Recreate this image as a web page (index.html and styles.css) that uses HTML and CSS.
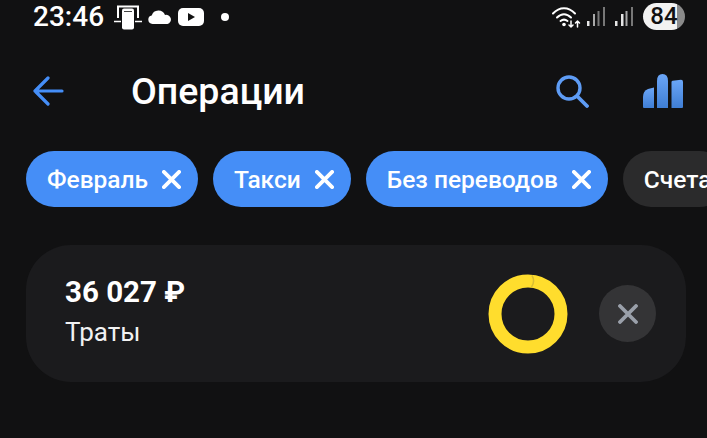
FILE: index.html
```html
<!DOCTYPE html>
<html lang="ru">
<head>
    <meta charset="UTF-8">
    <meta name="viewport" content="width=device-width, initial-scale=1.0">
    <title>Операции</title>
    <link rel="stylesheet" href="styles.css">
</head>
<body>
    <div class="status-bar">
        <span class="time">23:46</span>
        <svg class="status-icon" width="28" height="26" viewBox="0 0 28 26">
            <path d="M4 14V2.500h20V14" fill="none" stroke="#fff" stroke-width="2"/>
            <path d="M0 17.500h7M21 17.500h7" stroke="#fff" stroke-width="1.500"/>
            <rect x="8" y="4.500" width="12" height="21" rx="2" fill="#fff"/>
            <rect x="10" y="7" width="8" height="1" fill="#444"/>
        </svg>
        <svg class="status-icon" width="24" height="14" viewBox="0 0 24 14">
            <path d="M4.500 14a4.300 4.300 0 0 1-.8-8.500A7 7 0 0 1 17 5a4.600 4.600 0 0 1 2.500 9z" fill="#fff"/>
        </svg>
        <svg class="status-icon" width="26" height="18" viewBox="0 0 26 18">
            <rect width="26" height="18" rx="5" fill="#fff"/>
            <path d="M10 5v8l7-4z" fill="#111"/>
        </svg>
        <span class="dot"></span>
        <div class="status-right">
            <svg class="wifi" width="29" height="22" viewBox="0 0 29 22">
                <g fill="none" stroke="#fff" stroke-width="2" stroke-linecap="round">
                    <path d="M1 7.500C7.500 .5 16.500 .5 23 7.500"/>
                    <path d="M5 11.500c4.500-4.500 9.500-4.500 14 0"/>
                    <path d="M8.500 15c2.500-2 4.500-2 7 0"/>
                    <path d="M19 15v6M19 21l-2-2M19 21l2-2" stroke-width="1.500"/>
                    <path d="M25.500 21v-6M25.500 15l-2 2M25.500 15l2 2" stroke-width="1.500"/>
                </g>
                <circle cx="12" cy="18.500" r="1.800" fill="#fff"/>
            </svg>
            <svg class="signal" width="18" height="19" viewBox="0 0 18 19">
                <rect x="0" y="14" width="2.500" height="5" fill="#e6e6e6"/>
                <rect x="6" y="7" width="2" height="12" fill="#a8a8a8"/>
                <rect x="10.500" y="4" width="2" height="15" fill="#777"/>
                <rect x="16" y="0" width="2" height="19" fill="#777"/>
            </svg>
            <svg class="signal" width="18" height="19" viewBox="0 0 18 19">
                <rect x="0" y="14" width="2.500" height="5" fill="#e6e6e6"/>
                <rect x="6" y="7" width="2.500" height="12" fill="#e6e6e6"/>
                <rect x="10.500" y="4" width="2" height="15" fill="#a8a8a8"/>
                <rect x="16" y="0" width="2" height="19" fill="#777"/>
            </svg>
            <span class="battery">84</span>
        </div>
    </div>

    <div class="header">
        <svg class="back" width="32" height="30" viewBox="0 0 32 30">
            <path d="M30 15H3M16 2 3 15 16 28" fill="none" stroke="#458ef7" stroke-width="3.200" stroke-linecap="round" stroke-linejoin="round"/>
        </svg>
        <h1 class="title">Операции</h1>
        <svg class="search" width="34" height="34" viewBox="0 0 34 34">
            <circle cx="14" cy="14" r="11" fill="none" stroke="#5e9cf5" stroke-width="3.400"/>
            <path d="M22.500 22.500 32 32" stroke="#5e9cf5" stroke-width="3.800" stroke-linecap="round"/>
        </svg>
        <svg class="chart" width="40" height="34" viewBox="0 0 40 34">
            <defs>
                <linearGradient id="bars" x1="0" y1="0" x2="0" y2="1">
                    <stop offset="0" stop-color="#6ba6f8"/>
                    <stop offset="1" stop-color="#3f7ed4"/>
                </linearGradient>
            </defs>
            <path d="M1 34q-1 0-1-1V23q0-6 5-8l6-1.500V34z" fill="url(#bars)"/>
            <path d="M14 34V7q0-7 5.500-7T25 7v27z" fill="url(#bars)"/>
            <path d="M28.500 34V8q0-1 1-1.200l8.500-1q2 0 2 2V33q0 1-1 1z" fill="url(#bars)"/>
        </svg>
    </div>

    <div class="filters">
        <div class="chip active">Февраль <svg class="chip-x" width="19" height="19" viewBox="0 0 20 20"><path d="M2 2l16 16M18 2 2 18"/></svg></div>
        <div class="chip active">Такси <svg class="chip-x" width="19" height="19" viewBox="0 0 20 20"><path d="M2 2l16 16M18 2 2 18"/></svg></div>
        <div class="chip active">Без переводов <svg class="chip-x" width="19" height="19" viewBox="0 0 20 20"><path d="M2 2l16 16M18 2 2 18"/></svg></div>
        <div class="chip">Счета</div>
    </div>

    <div class="card">
        <div class="card-text">
            <div class="amount">36 027 ₽</div>
            <div class="label">Траты</div>
        </div>
        <svg class="ring" width="80" height="80" viewBox="0 0 80 80">
            <circle cx="40" cy="40" r="33" fill="none" stroke="#ffdd2d" stroke-width="13"/>
            <path d="M44 1.500q3.500 6-.500 11.500" fill="none" stroke="#d9bd33" stroke-width="1.500"/>
        </svg>
        <div class="close">
            <svg width="20" height="20" viewBox="0 0 20 20"><path d="M2 2l16 16M18 2 2 18"/></svg>
        </div>
    </div>
</body>
</html>
```

FILE: styles.css
```css
body {
    font-family: Roboto, "Noto Sans", sans-serif;
    background-color: #111112;
    color: #fff;
    margin: 0;
    height: 438px;
    overflow: hidden;
}

.status-bar {
    display: flex;
    align-items: center;
    height: 33px;
    padding: 0 22px 0 33px;
}

.time {
    font-size: 28px;
    font-weight: 500;
    margin-right: 10px;
}

.status-icon {
    margin-right: 6px;
}

.dot {
    width: 8px;
    height: 8px;
    margin-left: 11px;
    border-radius: 50%;
    background: #fff;
}

.status-right {
    display: flex;
    align-items: center;
    margin-left: auto;
}

.wifi {
    margin-right: 6px;
}

.signal {
    margin-right: 10px;
}

.battery {
    width: 42px;
    height: 27px;
    border-radius: 14px;
    background: linear-gradient(90deg, #f2f2f2 82%, #8a8a8a 82%);
    color: #111;
    font-size: 24px;
    font-weight: 500;
    line-height: 27px;
    text-align: center;
}

.header {
    display: flex;
    align-items: center;
    height: 116px;
    padding: 0 24px 2px 32px;
}

.back {
    margin-right: 67px;
}

.title {
    flex: 1;
    margin: 0;
    font-size: 37.500px;
    font-weight: 500;
}

.search {
    margin-right: 54px;
}

.filters {
    display: flex;
    gap: 15px;
    padding-left: 26px;
}

.chip {
    display: flex;
    align-items: center;
    flex-shrink: 0;
    gap: 14px;
    height: 56px;
    padding: 0 17px 0 21px;
    border-radius: 28px;
    background: #2b2b2c;
    font-size: 24.500px;
    font-weight: 500;
    white-space: nowrap;
}

.chip.active {
    background-color: #458ef7;
}

.chip-x path {
    fill: none;
    stroke: #fff;
    stroke-width: 4;
    stroke-linecap: round;
}

.card {
    display: flex;
    align-items: center;
    height: 137px;
    margin: 38px 21px 0 26px;
    padding: 0 30px 0 39px;
    border-radius: 45px;
    background: #1b1b1d;
}

.card-text {
    flex: 1;
    padding-bottom: 5px;
}

.amount {
    font-size: 29.500px;
    font-weight: 700;
    line-height: 34px;
}

.label {
    margin-top: 8px;
    font-size: 26px;
    line-height: 30px;
    color: #f2f2f2;
}

.close {
    display: flex;
    align-items: center;
    justify-content: center;
    width: 57px;
    height: 57px;
    margin-left: 31px;
    border-radius: 50%;
    background: #343436;
}

.close path {
    fill: none;
    stroke: #9aa0aa;
    stroke-width: 3.800;
    stroke-linecap: round;
}
```
